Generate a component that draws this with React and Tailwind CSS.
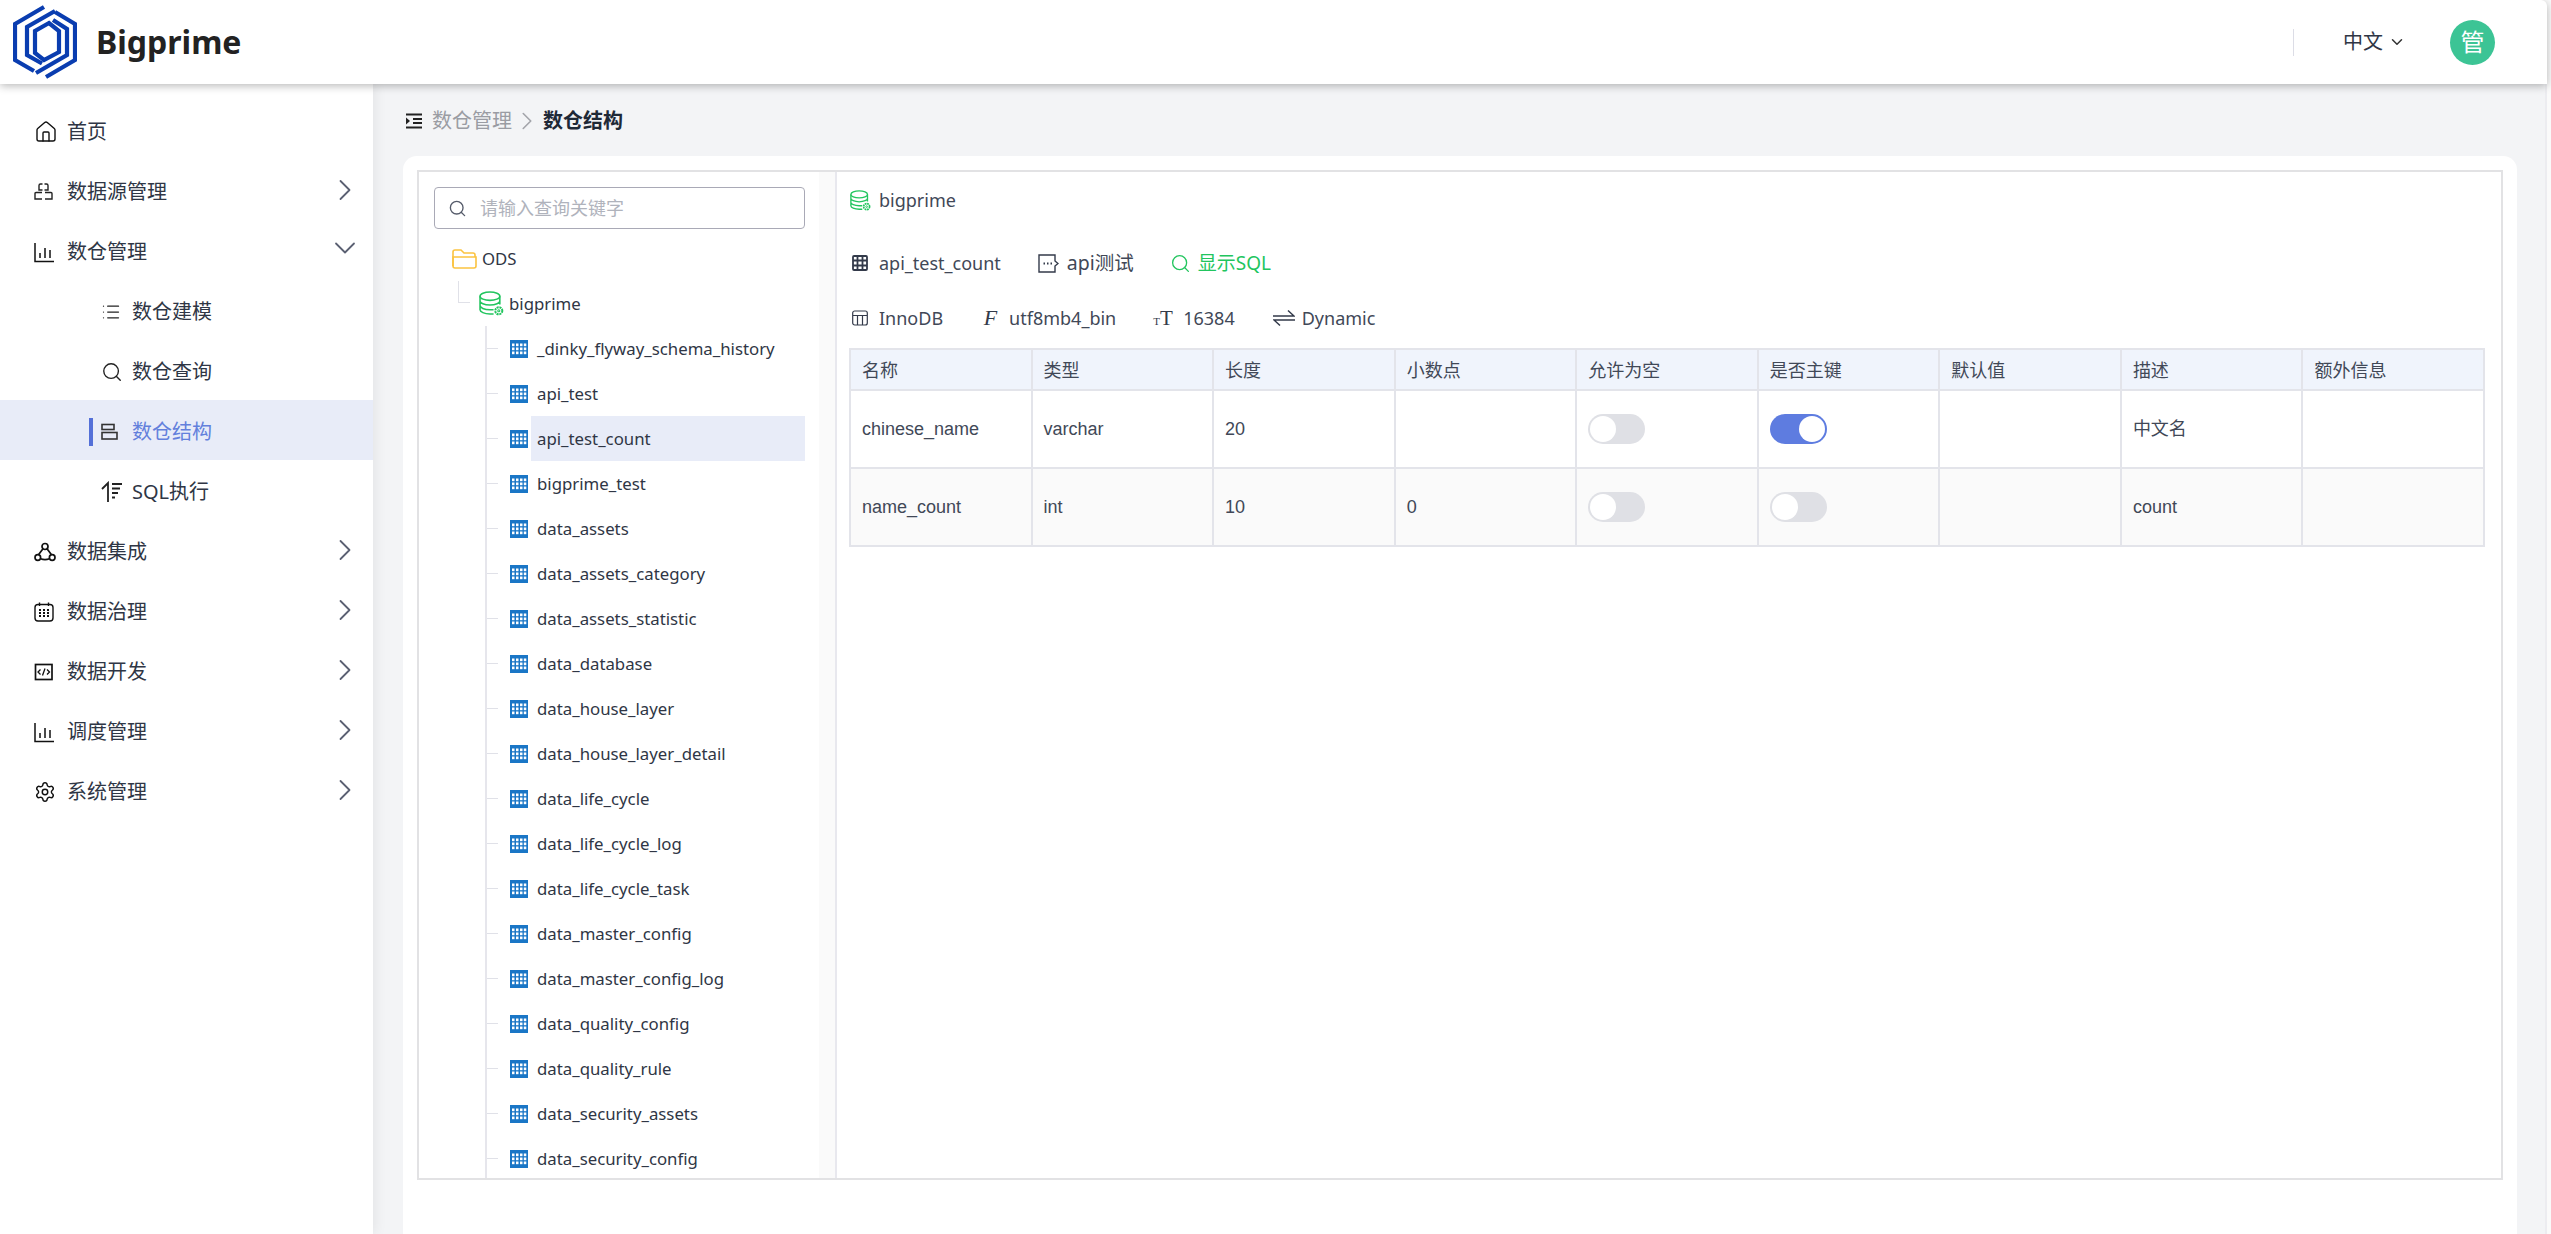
import React from 'react';
import { House, ChevronRight, ChevronDown, Search, List, Settings } from 'lucide-react';

const tables = [
  '_dinky_flyway_schema_history', 'api_test', 'api_test_count', 'bigprime_test', 'data_assets',
  'data_assets_category', 'data_assets_statistic', 'data_database', 'data_house_layer',
  'data_house_layer_detail', 'data_life_cycle', 'data_life_cycle_log', 'data_life_cycle_task',
  'data_master_config', 'data_master_config_log', 'data_quality_config', 'data_quality_rule',
  'data_security_assets', 'data_security_config',
];

const columns = ['名称', '类型', '长度', '小数点', '允许为空', '是否主键', '默认值', '描述', '额外信息'];

const rows = [
  { name: 'chinese_name', type: 'varchar', length: '20', scale: '', nullable: false, primary: true, comment: '中文名' },
  { name: 'name_count', type: 'int', length: '10', scale: '0', nullable: false, primary: false, comment: 'count' },
];

function Logo() {
  return (
    <svg width="64" height="74" viewBox="0 0 64 74" fill="none" stroke="#0a3db0" strokeWidth="4.200" className="shrink-0">
      <path d="M31 2 L2 19 V55 L21 66" />
      <path d="M42 6 L14 22 V50 L29 58.500" />
      <path d="M36 18 L22 26 V48 L31 55 L46 47 V26 Z" />
      <path d="M33 72 L62 55 V19 L42 7" />
      <path d="M23 68 L54 50 V24 L40 15" />
    </svg>
  );
}

function ChartIcon() {
  return (
    <svg width="20" height="21" viewBox="0 0 20 21" fill="none" stroke="#111" strokeWidth="1.500">
      <path d="M1 1V19.500H20" />
      <path d="M6 11V16M11 6V16M16 8V16" />
    </svg>
  );
}

function DatasourceIcon() {
  return (
    <svg width="19" height="18" viewBox="0 0 19 18" fill="none" stroke="#222" strokeWidth="1.400">
      <path d="M8.500 1H6.500Q5 1 5 2.500V7H8.500M10.500 1H12.500Q14 1 14 2.500V7H10.500" />
      <path d="M8 9.500H2Q1 9.500 1 10.500V16H8M11 9.500H17Q18 9.500 18 10.500V16H11" />
    </svg>
  );
}

function IntegrationIcon() {
  return (
    <svg width="22" height="20" viewBox="0 0 22 20" fill="none" stroke="#111" strokeWidth="1.700">
      <circle cx="11" cy="4.500" r="3" />
      <circle cx="3.800" cy="15.500" r="2.800" />
      <circle cx="18.200" cy="15.500" r="2.800" />
      <path d="M8.800 7 L4.500 12.800 M13.200 7 L17.500 12.800 M6.600 16.800 Q11 18.500 15.400 16.800" />
    </svg>
  );
}

function CalendarIcon() {
  return (
    <svg width="20" height="20" viewBox="0 0 20 20" fill="none" stroke="#111" strokeWidth="1.400">
      <rect x="1" y="2.500" width="18" height="16.500" rx="3" />
      <path d="M5.500 .5V4M14.500 .5V4" />
      <path d="M5 8h2M9 8h2M13 8h2M5 11h2M9 11h2M13 11h2M5 14h2M9 14h2M13 14h2" strokeWidth="2" />
    </svg>
  );
}

function CodeIcon() {
  return (
    <svg width="20" height="20" viewBox="0 0 20 20" fill="none" stroke="#111" strokeWidth="1.700">
      <rect x="1.500" y="2.500" width="16.500" height="15" />
      <path d="M6.500 7.500L4 10l2.500 2.500M13 7.500L15.500 10 13 12.500M11 6.500L8.500 13.500" strokeWidth="1.300" />
    </svg>
  );
}

function StructureIcon() {
  return (
    <svg width="17" height="18" viewBox="0 0 17 18" fill="none" stroke="#333" strokeWidth="1.600">
      <rect x="1" y="1.500" width="12" height="5" />
      <rect x="1" y="9.500" width="15" height="6.500" />
    </svg>
  );
}

function SortIcon() {
  return (
    <svg width="22" height="22" viewBox="0 0 22 22" fill="none" stroke="#222" strokeWidth="1.800">
      <path d="M7 21V2L1 8" />
      <path d="M11 3H21M11 7.500H19M11 12H17M11 16.500H14" />
    </svg>
  );
}

function BreadcrumbIcon() {
  return (
    <svg width="17" height="16" viewBox="0 0 17 16" fill="none" stroke="#222" strokeWidth="1.800" className="shrink-0">
      <path d="M0 1.500H16M7 6H16M7 10H16M0 14.500H16" />
      <path d="M0 4.500L4 8 0 11.500Z" fill="#222" stroke="none" />
    </svg>
  );
}

function FolderIcon() {
  return (
    <svg width="25" height="20" viewBox="0 0 25 20" fill="none" stroke="#fbc340" strokeWidth="1.600" className="shrink-0">
      <path d="M1 17V3Q1 1 3 1H9L12 4H21Q23 4 23 6V8" />
      <path d="M1 8H24V17Q24 19 22 19H3Q1 19 1 17Z" />
    </svg>
  );
}

function DatabaseIcon({ size }) {
  return (
    <svg width={size} height={size} viewBox="0 0 24 24" fill="none" stroke="#22c55e" strokeWidth="1.500" className="shrink-0">
      <ellipse cx="10.500" cy="5" rx="9.500" ry="4" />
      <path d="M1 5V18C1 20 5 22 10.500 22H14M1 9.500C1 11.500 5 13.500 10.500 13.500S20 11.500 20 9.500M1 14C1 16 5 18 10.500 18H14M20 5V13" />
      <circle cx="19" cy="19" r="3.400" strokeWidth="1.900" strokeDasharray="2 .7" />
      <circle cx="19" cy="19" r="1" strokeWidth="1" />
    </svg>
  );
}

function TableIcon() {
  return (
    <svg width="18" height="18" viewBox="0 0 18 18" className="shrink-0">
      <rect width="18" height="18" fill="#1a76c6" />
      {[3.500, 7.500, 11.500].map((y) =>
        [2, 6, 10, 13.800].map((x) => (
          <rect key={`${x}-${y}`} x={x} y={y} width="2.500" height="2.700" fill="#fff" />
        )),
      )}
    </svg>
  );
}

function GridIcon() {
  return (
    <svg width="16" height="16" viewBox="0 0 16 16" fill="none" stroke="#333a4a" strokeWidth="1.800" className="shrink-0">
      <rect x="1" y="1" width="14" height="14" rx="1" />
      <path d="M5.500 1V15M10.500 1V15M1 5.500H15M1 10.500H15" />
    </svg>
  );
}

function EngineIcon() {
  return (
    <svg width="16" height="16" viewBox="0 0 16 16" fill="none" stroke="#333a4a" strokeWidth="1.200" className="shrink-0">
      <rect x=".7" y="1" width="14.600" height="14" rx="2" />
      <path d="M1 5.500H15M5.500 5.500V15M10.500 5.500V15" />
    </svg>
  );
}

function TagIcon() {
  return (
    <svg width="21" height="20" viewBox="0 0 21 20" fill="none" stroke="#333a4a" strokeWidth="1.400" className="shrink-0">
      <path d="M1 2H17V8L20 10.500 17 13V19H1Z" />
      <path d="M5.500 10.500h1.500M9 10.500h1.500M12.500 10.500h1.500" strokeWidth="1.800" />
    </svg>
  );
}

function SwapIcon() {
  return (
    <svg width="22" height="18" viewBox="0 0 22 18" fill="none" stroke="#333a4a" strokeWidth="1.500" className="shrink-0">
      <path d="M0 7H21L15 1.500" />
      <path d="M22 11H1L7 16.500" />
    </svg>
  );
}

function MenuItem({ icon, label, arrow }) {
  return (
    <div className="h-[60px] flex items-center pl-[34px] pr-[10px] pt-[4px]">
      <span className="w-[33px] shrink-0 flex items-center">{icon}</span>
      <span className="flex-1 text-[20px] text-[#2f3645]">{label}</span>
      {arrow === 'right' && <ChevronRight size={36} strokeWidth={1.200} color="#5b6072" className="-mt-[4px]" />}
      {arrow === 'down' && <ChevronDown size={36} strokeWidth={1.200} color="#5b6072" className="-mt-[8px]" />}
    </div>
  );
}

function SubItem({ icon, label, active }) {
  return (
    <div className={`h-[60px] flex items-center pt-[4px] ${active ? 'bg-[#e8ecf8]' : ''}`}>
      <span className={`ml-[89px] w-[4px] h-[28px] ${active ? 'bg-[#5470d8]' : ''}`} />
      <span className="ml-[8px] w-[31px] shrink-0 flex items-center">{icon}</span>
      <span className={`text-[20px] ${active ? 'text-[#6380dc]' : 'text-[#2f3645]'}`}>{label}</span>
    </div>
  );
}

function Sidebar() {
  return (
    <aside className="w-[373px] shrink-0 bg-white pt-[16px] shadow-[2px_0_12px_rgba(0,0,0,0.07)] z-10">
      <MenuItem icon={<House size={24} strokeWidth={1.400} color="#111" />} label="首页" />
      <MenuItem icon={<DatasourceIcon />} label="数据源管理" arrow="right" />
      <MenuItem icon={<ChartIcon />} label="数仓管理" arrow="down" />
      <SubItem icon={<List size={20} strokeWidth={1.500} color="#222" />} label="数仓建模" />
      <SubItem icon={<Search size={22} strokeWidth={1.500} color="#222" />} label="数仓查询" />
      <SubItem icon={<StructureIcon />} label="数仓结构" active />
      <SubItem icon={<SortIcon />} label="SQL执行" />
      <MenuItem icon={<IntegrationIcon />} label="数据集成" arrow="right" />
      <MenuItem icon={<CalendarIcon />} label="数据治理" arrow="right" />
      <MenuItem icon={<CodeIcon />} label="数据开发" arrow="right" />
      <MenuItem icon={<ChartIcon />} label="调度管理" arrow="right" />
      <MenuItem icon={<Settings size={22} strokeWidth={1.600} color="#111" />} label="系统管理" arrow="right" />
    </aside>
  );
}

function Header() {
  return (
    <header className="h-[84px] shrink-0 bg-white rounded-tr-[6px] flex items-center pl-[13px] pr-[52px] shadow-[0_2px_8px_rgba(0,0,0,0.28)] z-20 relative">
      <Logo />
      <span className="ml-[19px] text-[32px] font-bold text-[#222]">Bigprime</span>
      <div className="ml-auto w-px h-[27px] bg-[#dcdde6]" />
      <span className="ml-[49px] text-[20px] text-[#2f3645]">中文</span>
      <ChevronDown size={18} strokeWidth={2} color="#333" className="ml-[5px]" />
      <div className="ml-[44px] w-[45px] h-[45px] rounded-full bg-[#3cc495] text-white text-[24px] flex items-center justify-center">管</div>
    </header>
  );
}

function TreePanel() {
  return (
    <div className="w-[418px] shrink-0 flex border-r-2 border-[#e8e8ee] overflow-hidden">
      <div className="flex-1 min-w-0">
        <div className="mt-[15px] ml-[15px] mr-[14px] h-[42px] border border-[#a9a9b6] rounded-[4px] flex items-center pl-[13px]">
          <Search size={19} strokeWidth={1.700} color="#555b6a" />
          <span className="ml-[13px] text-[18px] text-[#b0b3bc]">请输入查询关键字</span>
        </div>
        <div className="mt-[7px] h-[45px] flex items-center pl-[33px]">
          <FolderIcon />
          <span className="ml-[5px] text-[16.800px] text-[#2f3645]">ODS</span>
        </div>
        <div className="relative h-[45px] flex items-center pl-[60px]">
          <div className="absolute left-[39px] top-0 w-[12px] h-[22px] border-l border-b border-[#e0e1e8]" />
          <DatabaseIcon size={25} />
          <span className="ml-[5px] text-[16.800px] text-[#2f3645]">bigprime</span>
        </div>
        <div className="ml-[66px] border-l-2 border-[#e6e6ec]">
          {tables.map((t) => (
            <div key={t} className="h-[45px] flex items-center">
              <div className="w-[11px] h-px bg-[#e0e1e8] shrink-0" />
              <div className="ml-[12px]"><TableIcon /></div>
              <div className={`ml-[3px] pl-[6px] h-full flex-1 mr-[14px] flex items-center text-[16.800px] text-[#2f3645] whitespace-nowrap ${t === 'api_test_count' ? 'bg-[#e8ecf8]' : ''}`}>
                {t}
              </div>
            </div>
          ))}
        </div>
      </div>
      <div className="w-[16px] shrink-0 bg-[#fafafa]" />
    </div>
  );
}

function Toggle({ on }) {
  return (
    <div className={`w-[57px] h-[30px] rounded-full p-[2px] flex ${on ? 'bg-[#5e7ce0] justify-end' : 'bg-[#dfe0e5]'}`}>
      <div className="w-[26px] h-[26px] rounded-full bg-white" />
    </div>
  );
}

function Meta({ icon, children, className = 'text-[#414857] text-[18px]', gap = 'ml-[11px]' }) {
  return (
    <span className="flex items-center">
      {icon}
      <span className={`${gap} ${className}`}>{children}</span>
    </span>
  );
}

function DetailPanel() {
  return (
    <div className="flex-1 min-w-0 pl-[12px] pr-[16px]">
      <div className="h-[54px] mt-[1px] flex items-center pl-[1px]">
        <DatabaseIcon size={21} />
        <span className="ml-[8px] text-[18px] text-[#414857]">bigprime</span>
      </div>
      <div className="mt-[24px] h-[24px] flex items-center pl-[3px]">
        <Meta icon={<GridIcon />}>api_test_count</Meta>
        <span className="w-[37px]" />
        <Meta icon={<TagIcon />} gap="ml-[8px]" className="text-[#414857] text-[19.500px]">api测试</Meta>
        <span className="w-[36px]" />
        <Meta icon={<Search size={21} strokeWidth={1.500} color="#22c55e" />} className="text-[#22c55e] text-[19px]" gap="ml-[7px]">显示SQL</Meta>
      </div>
      <div className="mt-[31px] h-[24px] flex items-center pl-[3px]">
        <Meta icon={<EngineIcon />}>InnoDB</Meta>
        <span className="w-[37px]" />
        <Meta
          icon={<span className="w-[21px] text-center font-['Liberation_Serif',serif] italic text-[22px] leading-none text-[#333a4a]">F</span>}
          gap="ml-[8px]"
        >
          utf8mb4_bin
        </Meta>
        <span className="w-[37px]" />
        <Meta
          icon={<span className="w-[21px] font-['Liberation_Serif',serif] text-[#333a4a] leading-none"><span className="text-[11px]">T</span><span className="text-[21px]">T</span></span>}
          gap="ml-[9px]"
        >
          16384
        </Meta>
        <span className="w-[38px]" />
        <Meta icon={<SwapIcon />} gap="ml-[7px]">Dynamic</Meta>
      </div>
      <div className="mt-[18px] border-t-2 border-l-2 border-[#e3e4ea] font-['Liberation_Sans','Noto_Sans_CJK_SC',sans-serif] text-[18px] text-[#414857]">
        <div className="grid grid-cols-9 h-[41px] bg-[#f0f4fc] border-b-2 border-[#e3e4ea]">
          {columns.map((c) => (
            <div key={c} className="flex items-center pl-[11px] border-r-2 border-[#e3e4ea] font-['Noto_Sans_CJK_SC',sans-serif]">{c}</div>
          ))}
        </div>
        {rows.map((r, i) => (
          <div key={r.name} className={`grid grid-cols-9 h-[78px] border-b-2 border-[#e3e4ea] ${i === 1 ? 'bg-[#fafafa]' : 'bg-white'}`}>
            {[r.name, r.type, r.length, r.scale].map((v, k) => (
              <div key={k} className="flex items-center pl-[11px] border-r-2 border-[#e3e4ea]">{v}</div>
            ))}
            <div className="flex items-center pl-[11px] border-r-2 border-[#e3e4ea]"><Toggle on={r.nullable} /></div>
            <div className="flex items-center pl-[11px] border-r-2 border-[#e3e4ea]"><Toggle on={r.primary} /></div>
            <div className="flex items-center pl-[11px] border-r-2 border-[#e3e4ea]" />
            <div className="flex items-center pl-[11px] border-r-2 border-[#e3e4ea]">{r.comment}</div>
            <div className="flex items-center pl-[11px] border-r-2 border-[#e3e4ea]" />
          </div>
        ))}
      </div>
    </div>
  );
}

export default function App() {
  return (
    <div className="h-screen overflow-hidden bg-[#fafafa] font-['Noto_Sans','Noto_Sans_CJK_SC',sans-serif]">
      <div className="w-[2547px] h-full flex flex-col">
        <Header />
        <div className="flex-1 min-h-0 flex">
          <Sidebar />
          <main className="flex-1 min-w-0 bg-[#f3f4f6] pl-[30px] pr-[28px] border-r-2 border-[#ececf0]">
            <div className="h-[72px] flex items-center pt-[2px] pl-[3px]">
              <BreadcrumbIcon />
              <span className="ml-[9px] text-[20px] text-[#9a9ca3]">数仓管理</span>
              <ChevronRight size={30} strokeWidth={1.300} color="#a3a5ab" />
              <span className="ml-[1px] text-[20px] font-bold text-[#1f2937]">数仓结构</span>
            </div>
            <div className="h-[1100px] bg-white rounded-[14px] p-[14px]">
              <div className="h-[1010px] border-2 border-[#e2e2e4] flex overflow-hidden">
                <TreePanel />
                <DetailPanel />
              </div>
            </div>
          </main>
        </div>
      </div>
    </div>
  );
}
